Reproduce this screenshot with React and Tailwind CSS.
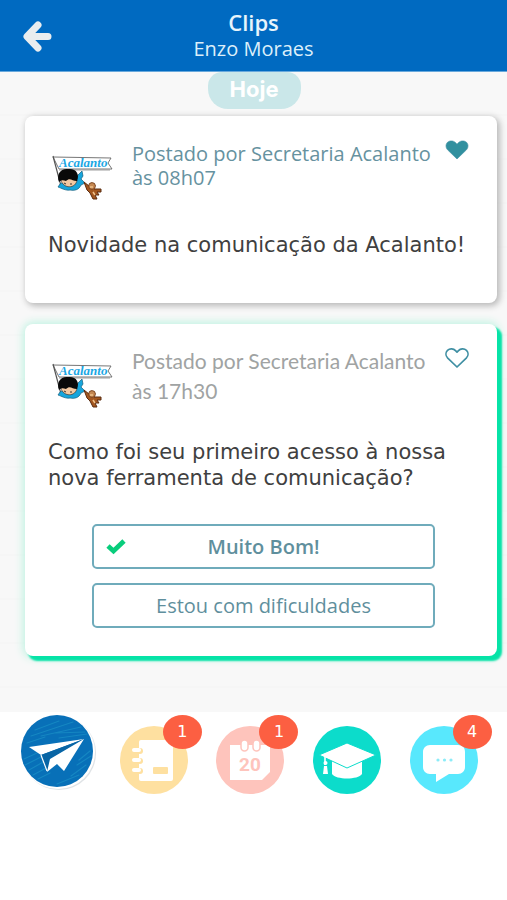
import { useState } from "react";

function SchoolLogo() {
  return (
    <svg viewBox="0 0 62 46" className="h-[46px] w-[62px] shrink-0" role="img" aria-label="Acalanto">
      <path d="M1 2 L59 3 L56 8 L60 14 L7 14 Z" fill="#fff" stroke="#666" strokeWidth="0.9" />
      <path d="M1 1 L9 31" stroke="#555" strokeWidth="1.2" />
      <path d="M7 15 H58" stroke="#888" strokeWidth="0.8" />
      <text
        x="7"
        y="12"
        fill="#1aa7e4"
        fontFamily="'Liberation Serif', serif"
        fontStyle="italic"
        fontWeight="700"
        fontSize="13"
      >
        Acalanto
      </text>
      <path d="M8 29 C13 25 23 27 26 20 L30 16 L31 21 L29 24 L33 28 L29 30 C27 35 22 36 18 35 C14 36 9 33 6 32 Z" fill="#16a5dc" stroke="#155f7c" strokeWidth="0.7" />
      <path d="M9 25 C11 34 24 34 25 25 L20 22 H12 Z" fill="#f3c9a2" stroke="#35251b" strokeWidth="0.6" />
      <path d="M7 27 C4 19 9 13 16 14 C24 13 28 19 25 26 C20 26 18 22 14 26 C11 25 9 25 7 27 Z" fill="#090909" />
      <path d="M12 28 l2 1 M18 29 l2 0" stroke="#222" strokeWidth="0.9" />
      <path d="M32 27 L37 31 L39 28 L43 30 L42 34 L49 34 L49 37 L45 37 L47 40 L43 40 L45 44 L41 44 L38 38 L35 35 Z" fill="#a4571f" stroke="#5b2c11" strokeWidth="1" />
      <circle cx="40" cy="31" r="3.4" fill="#c58852" stroke="#6d3715" strokeWidth="0.8" />
      <path d="M38 32 h3 M41 37 l2 3" stroke="#f0c28c" strokeWidth="1.5" />
    </svg>
  );
}

function Heart({ filled }) {
  return (
    <svg viewBox="0 0 24 20" className="h-5 w-6" aria-hidden="true">
      <path
        d="M12 19 L2.500 9.800 C0.500 7.500 0.500 4.200 2.500 2.300 C4.900 0.200 8.600 0.600 10.500 2.600 L12 4.200 L13.500 2.600 C15.400 0.600 19.100 0.200 21.500 2.300 C23.500 4.200 23.500 7.500 21.500 9.800 Z"
        fill={filled ? "#31909f" : "none"}
        stroke="#3f8fa3"
        strokeWidth={filled ? 0.6 : 1.7}
        strokeLinejoin="round"
      />
    </svg>
  );
}

function LikeButton({ initial }) {
  const [liked, setLiked] = useState(initial);
  return (
    <button type="button" aria-label="Curtir" aria-pressed={liked} onClick={() => setLiked(!liked)} className="mt-6 shrink-0 self-start">
      <Heart filled={liked} />
    </button>
  );
}

function NavItem({ label, badge, active, children }) {
  return (
    <a href="#" aria-label={label} className={active ? "relative mt-[2px] block size-[72px]" : "relative mt-[14px] block size-[68px]"}>
      {children}
      {badge && (
        <span className="absolute -top-[11px] left-[43px] flex h-[34px] w-[39px] items-center justify-center rounded-[50%] bg-[#fc5f42] font-['DejaVu_Sans',sans-serif] text-base text-white">
          {badge}
        </span>
      )}
    </a>
  );
}

function PlaneIcon() {
  return (
    <svg viewBox="0 0 72 75" className="h-[75px] w-[72px] overflow-visible" aria-hidden="true">
      <circle cx="38" cy="39" r="37" fill="#dfe3e6" />
      <circle cx="37" cy="38" r="37" fill="#fff" />
      <circle cx="36" cy="37" r="36" fill="#0870b8" />
      <g stroke="#1c93c8" strokeWidth="1.2" strokeLinecap="round" opacity="0.65">
        <path d="M14 16 L38 7 M10 22 L52 8 M20 22 L60 13 M6 29 L24 23 M34 19 L64 18 M38 24 L66 20" />
        <path d="M3 45 L16 39 M4 51 L20 43 M8 56 L24 47 M12 61 L25 54 M17 65 L29 59 M50 62 L65 51 M56 51 L70 42 M58 46 L69 37 M36 70 L58 61" />
      </g>
      <path d="M63 25 L8 33 L20 41 Z" fill="#fff" />
      <path d="M63 25 L20 41 L26 58 L29 45 Z" fill="#0865a5" />
      <path d="M20 41 L26 57" fill="none" stroke="#fff" strokeWidth="1.2" />
      <path d="M63 25 L29 45 L26 58 L36 50 L43 57 Z" fill="#fff" />
    </svg>
  );
}

function AgendaIcon() {
  return (
    <svg viewBox="0 0 68 68" className="size-full" aria-hidden="true">
      <circle cx="34" cy="34" r="34" fill="#fee0a0" />
      <rect x="19" y="14" width="34" height="41" rx="2" fill="#fff" />
      <g fill="#fee0a0">
        <circle cx="20" cy="25" r="3" />
        <circle cx="20" cy="35" r="3" />
        <circle cx="20" cy="45" r="3" />
      </g>
      <g fill="#fff">
        <rect x="12" y="22" width="9" height="4" rx="2" />
        <rect x="12" y="32" width="9" height="4" rx="2" />
        <rect x="12" y="42" width="9" height="4" rx="2" />
      </g>
      <rect x="33" y="41" width="15" height="7" rx="1" fill="#fee0a0" />
    </svg>
  );
}

function CalendarIcon() {
  return (
    <svg viewBox="0 0 68 68" className="size-full" aria-hidden="true">
      <circle cx="34" cy="34" r="34" fill="#fec4bc" />
      <path d="M14 19 H54 V46 L46 54 H14 Z" fill="#fff" />
      <rect x="25" y="14" width="7" height="11" rx="3.500" fill="#fff" stroke="#fec4bc" strokeWidth="1.500" />
      <rect x="37" y="14" width="7" height="11" rx="3.500" fill="#fff" stroke="#fec4bc" strokeWidth="1.500" />
      <text x="34" y="45" textAnchor="middle" fill="#fec4bc" fontFamily="Roboto, sans-serif" fontWeight="700" fontSize="19">
        20
      </text>
    </svg>
  );
}

function CapIcon() {
  return (
    <svg viewBox="0 0 68 68" className="size-full" aria-hidden="true">
      <circle cx="34" cy="34" r="34" fill="#0cdccb" />
      <path d="M19 34 L34 40 L49 34 V48 C45 54 23 54 19 48 Z" fill="#fff" />
      <path d="M34 17 L63 29 L34 42 L6 29 Z" fill="#fff" stroke="#0cdccb" strokeWidth="1" />
      <path d="M12 31 V39" stroke="#fff" strokeWidth="1.600" />
      <circle cx="12.500" cy="37" r="2" fill="#fff" />
      <path d="M11 40 H14 L15 48 H10 Z" fill="#fff" />
    </svg>
  );
}

function ChatIcon() {
  return (
    <svg viewBox="0 0 68 68" className="size-full" aria-hidden="true">
      <circle cx="34" cy="34" r="34" fill="#58e8fd" />
      <path d="M20 19 H48 C53 19 55 22 55 26 V41 C55 45 52 48 48 48 H39 L26 56 V48 H20 C16 48 13 45 13 41 V26 C13 22 16 19 20 19 Z" fill="#fff" />
      <g fill="#8cecf8">
        <circle cx="28" cy="34" r="1.600" />
        <circle cx="34.500" cy="34" r="1.600" />
        <circle cx="41" cy="34" r="1.600" />
      </g>
    </svg>
  );
}

export default function App() {
  const [answer, setAnswer] = useState("bom");
  const options = [
    { id: "bom", label: "Muito Bom!" },
    { id: "dif", label: "Estou com dificuldades" },
  ];

  return (
    <div className="min-h-screen bg-white font-['Open_Sans',sans-serif]">
      <header className="grid h-[72px] grid-cols-[74px_1fr_74px] items-center border-b border-[#69a9dc] bg-[#006ac1]">
        <button type="button" aria-label="Voltar" className="ml-[22px] w-8">
          <svg viewBox="0 0 32 32" className="size-8" aria-hidden="true">
            <path d="M16 5 L5 16.500 L16 28 M6 16.500 H26" fill="none" stroke="#e9edef" strokeWidth="7" strokeLinecap="round" strokeLinejoin="round" />
          </svg>
        </button>
        <div className="text-center">
          <h1 className="text-[22px] leading-[26px] font-semibold text-[#e8f5fc]">Clips</h1>
          <p className="text-xl leading-7 text-[#dceffa]">Enzo Moraes</p>
        </div>
      </header>

      <main className="bg-[#f7f7f7] bg-[repeating-linear-gradient(to_bottom,#f8f8f8_0,#f8f8f8_42px,#f4f4f4_43px,#f8f8f8_44px)] pr-[10px] pb-14 pl-[25px]">
        <div className="mr-[14px] flex justify-center">
          <span className="flex h-[37px] w-[93px] items-center justify-center rounded-t-[14px] rounded-b-[20px] bg-[#cae7e9] pb-[4px] font-['Inter',sans-serif] text-[22px] leading-7 font-bold text-white">
            Hoje
          </span>
        </div>

        <div className="mt-[7px] flex flex-col gap-[21px]">
          <article className="rounded-lg bg-white pb-[45px] shadow-[2px_2px_6px_1px_#b9b9b9]">
            <div className="flex pr-[28px] pl-[27px]">
              <div className="pt-[39px] pr-[18px]">
                <SchoolLogo />
              </div>
              <p className="flex-1 pt-[26px] text-xl leading-6 text-[#66929f]">
                Postado por Secretaria Acalanto
                <br />
                às 08h07
              </p>
              <LikeButton initial={true} />
            </div>
            <p className="pt-[31px] pr-[10px] pl-[23px] font-['DejaVu_Sans',sans-serif] text-[21px] leading-[26px] text-[#404040]">
              Novidade na comunicação da Acalanto!
            </p>
          </article>

          <article className="rounded-lg bg-white pb-[28px] shadow-[4px_4px_2px_1px_#06e3a7,0px_0px_8px_2px_#bff3e2]">
            <div className="flex pr-[28px] pl-[27px]">
              <div className="pt-[39px] pr-[18px]">
                <SchoolLogo />
              </div>
              <p className="flex-1 pt-[22px] font-['Lato',sans-serif] text-[21px] leading-[30px] text-[#a0a3a3]">
                Postado por Secretaria Acalanto
                <br />
                às 17h30
              </p>
              <LikeButton initial={false} />
            </div>
            <p className="pt-[30px] pr-[10px] pl-[23px] font-['DejaVu_Sans',sans-serif] text-[21px] leading-[26px] text-[#404040]">
              Como foi seu primeiro acesso à nossa nova ferramenta de comunicação?
            </p>
            <div className="mt-[33px] flex flex-col gap-[14px] pr-[62px] pl-[67px]">
              {options.map((o) => (
                <button
                  key={o.id}
                  type="button"
                  aria-pressed={answer === o.id}
                  onClick={() => setAnswer(o.id)}
                  className="grid h-[45px] grid-cols-[44px_1fr_44px] items-center rounded-[5px] border-2 border-[#6fabbb] text-xl text-[#5f8f9d]"
                >
                  <span className="flex justify-center">
                    {answer === o.id && (
                      <svg viewBox="0 0 20 16" className="h-4 w-5" aria-hidden="true">
                        <path d="M2 7 L7.500 12 L18 2" fill="none" stroke="#09cd7c" strokeWidth="4.800" />
                      </svg>
                    )}
                  </span>
                  <span className={answer === o.id ? "font-semibold" : ""}>{o.label}</span>
                </button>
              ))}
            </div>
          </article>
        </div>
      </main>

      <nav className="grid grid-cols-5 justify-items-center pr-[15px] pl-[9px]">
        <NavItem label="Clips" active>
          <PlaneIcon />
        </NavItem>
        <NavItem label="Agenda" badge="1">
          <AgendaIcon />
        </NavItem>
        <NavItem label="Calendário" badge="1">
          <CalendarIcon />
        </NavItem>
        <NavItem label="Escola">
          <CapIcon />
        </NavItem>
        <NavItem label="Mensagens" badge="4">
          <ChatIcon />
        </NavItem>
      </nav>
    </div>
  );
}
